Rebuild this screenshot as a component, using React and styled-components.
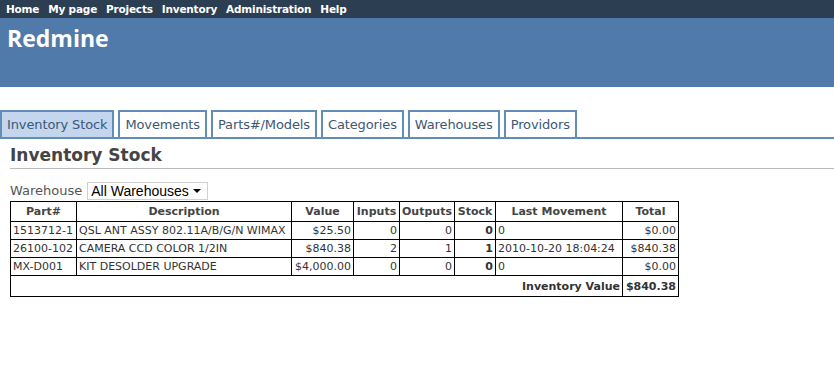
import React from "react";
import styled, { createGlobalStyle } from "styled-components";

const GlobalStyle = createGlobalStyle`
  body {
    margin: 0;
    background: #fff;
    font-family: "DejaVu Sans", Verdana, sans-serif;
    font-size: 12px;
    color: #333;
  }
`;

const menu = ["Home", "My page", "Projects", "Inventory", "Administration", "Help"];
const tabs = ["Inventory Stock", "Movements", "Parts#/Models", "Categories", "Warehouses", "Providors"];

const rows = [
  { part: "1513712-1", desc: "QSL ANT ASSY 802.11A/B/G/N WIMAX", value: "$25.50", inputs: 0, outputs: 0, stock: 0, last: "0", total: "$0.00" },
  { part: "26100-102", desc: "CAMERA CCD COLOR 1/2IN", value: "$840.38", inputs: 2, outputs: 1, stock: 1, last: "2010-10-20 18:04:24", total: "$840.38" },
  { part: "MX-D001", desc: "KIT DESOLDER UPGRADE", value: "$4,000.00", inputs: 0, outputs: 0, stock: 0, last: "0", total: "$0.00" },
];

export default function App() {
  return (
    <>
      <GlobalStyle />
      <TopMenu>
        {menu.map(item => (
          <MenuLink key={item}>{item}</MenuLink>
        ))}
      </TopMenu>
      <Header>
        <h1>Redmine</h1>
      </Header>
      <Main>
        <Tabs>
          {tabs.map((tab, index) => (
            <Tab key={tab} selected={index === 0}>
              {tab}
            </Tab>
          ))}
        </Tabs>
        <Content>
          <Title>Inventory Stock</Title>
          <Filter>
            <label>Warehouse</label>
            <Select>
              <span>All Warehouses</span>
              <Arrow />
            </Select>
          </Filter>
          <StockTable>
            <colgroup>
              <col style={{ width: 66 }} />
              <col style={{ width: 215 }} />
              <col style={{ width: 62 }} />
              <col style={{ width: 46 }} />
              <col style={{ width: 55 }} />
              <col style={{ width: 41 }} />
              <col style={{ width: 127 }} />
              <col style={{ width: 56 }} />
            </colgroup>
            <thead>
              <tr>
                <th>Part#</th>
                <th>Description</th>
                <th>Value</th>
                <th>Inputs</th>
                <th>Outputs</th>
                <th>Stock</th>
                <th>Last Movement</th>
                <th>Total</th>
              </tr>
            </thead>
            <tbody>
              {rows.map(row => (
                <tr key={row.part}>
                  <Cell>{row.part}</Cell>
                  <Cell>{row.desc}</Cell>
                  <Cell num>{row.value}</Cell>
                  <Cell num>{row.inputs}</Cell>
                  <Cell num>{row.outputs}</Cell>
                  <Cell num bold>{row.stock}</Cell>
                  <Cell>{row.last}</Cell>
                  <Cell num>{row.total}</Cell>
                </tr>
              ))}
              <FooterRow>
                <Cell num bold colSpan={7}>Inventory Value</Cell>
                <Cell num bold>$840.38</Cell>
              </FooterRow>
            </tbody>
          </StockTable>
        </Content>
      </Main>
    </>
  );
}

const TopMenu = styled.div`
  height: 18px;
  background: #2c3e52;
  display: flex;
  align-items: center;
  gap: 9px;
  padding: 0 6px;
`;

const MenuLink = styled.a`
  color: #fff;
  font-weight: bold;
  font-size: 10.5px;
  letter-spacing: -0.2px;
  line-height: 18px;
`;

const Header = styled.div`
  height: 69px;
  background: #507aaa;
  padding: 0 7px;
  box-sizing: border-box;
  h1 {
    margin: 0;
    padding-top: 5px;
    color: #fff;
    font-family: "Open Sans", "DejaVu Sans", sans-serif;
    font-size: 23px;
    line-height: 30px;
    font-weight: bold;
  }
`;

const Main = styled.div`
  padding-top: 23px;
`;

const Tabs = styled.div`
  display: flex;
  gap: 4px;
  border-bottom: 2px solid #628db6;
`;

const Tab = styled.div`
  height: 25px;
  line-height: 25px;
  padding: 0 5px;
  border: 2px solid #628db6;
  border-bottom: none;
  font-size: 13px;
  letter-spacing: -0.12px;
  color: #3b5877;
  background: ${p => (p.selected ? "#c3d6ee" : "#fff")};
`;

const Content = styled.div`
  padding: 0 0 0 10px;
`;

const Title = styled.h2`
  margin: 0;
  padding: 6px 0 3px;
  font-size: 17px;
  line-height: 20px;
  font-weight: bold;
  color: #444;
  border-bottom: 1px solid #bbb;
`;

const Filter = styled.div`
  display: flex;
  align-items: center;
  gap: 5px;
  margin-top: 12px;
  height: 19px;
  label {
    font-size: 13px;
    color: #555;
  }
`;

const Select = styled.div`
  width: 121px;
  height: 18px;
  box-sizing: border-box;
  border: 1px solid #d0d0d0;
  display: flex;
  align-items: center;
  justify-content: space-between;
  padding: 0 6px 0 3px;
  font-family: "Liberation Sans", Arial, sans-serif;
  font-size: 14px;
  color: #000;
`;

const Arrow = styled.span`
  width: 0;
  height: 0;
  border-left: 4px solid transparent;
  border-right: 4px solid transparent;
  border-top: 4px solid #000;
`;

const StockTable = styled.table`
  margin-top: 1px;
  width: 668px;
  table-layout: fixed;
  border-collapse: collapse;
  font-size: 11px;
  th,
  td {
    border: 1px solid #000;
    white-space: nowrap;
    overflow: hidden;
  }
  th {
    height: 19px;
    padding: 0 2px;
    text-align: center;
    font-weight: bold;
    color: #444;
  }
`;

const Cell = styled.td`
  height: 17px;
  padding: 0 2px;
  text-align: ${p => (p.num ? "right" : "left")};
  font-weight: ${p => (p.bold ? "bold" : "normal")};
  color: #333;
`;

const FooterRow = styled.tr`
  td {
    height: 20px;
  }
`;
